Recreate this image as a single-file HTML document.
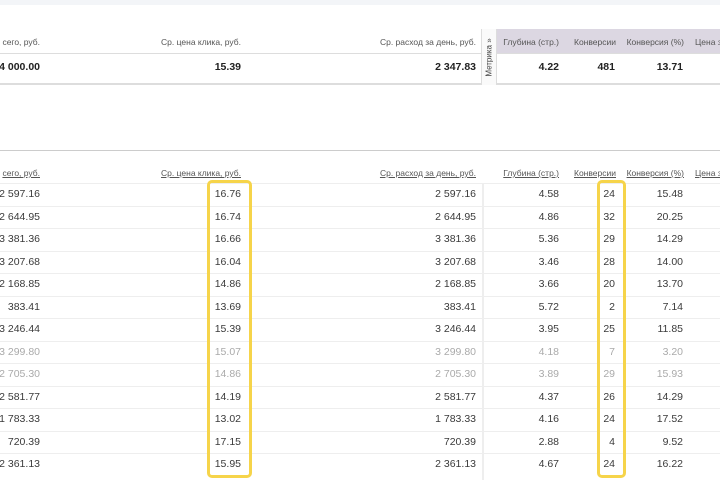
<!DOCTYPE html>
<html><head><meta charset="utf-8"><style>
body{margin:0;width:720px;height:480px;overflow:hidden;background:#fff;position:relative;font-family:"Liberation Sans","DejaVu Sans",sans-serif;color:#333}
.a{position:absolute;white-space:nowrap;text-align:right}
.h{font-size:8.5px;color:#555}
.u{text-decoration:underline}
.c{font-size:10.5px;color:#3a3a3a}
.b{font-size:10.5px;font-weight:bold;color:#222}
.g{color:#aaa}
.ln{position:absolute;left:0;width:720px;height:1px}
</style></head><body>
<div style="position:absolute;left:0;top:0;width:720px;height:5px;background:#f3f5f8"></div>
<div style="position:absolute;left:497px;top:29px;width:223px;height:24px;background:#dcd7e2"></div>
<div class="ln" style="top:53px;background:#ddd"></div>
<div class="ln" style="top:83px;background:#ddd;height:2px"></div>
<div style="position:absolute;left:481px;top:29px;width:16px;height:56px;background:#fafafa;border-left:1px solid #ddd;border-right:1px solid #ddd;box-sizing:border-box"></div>
<div style="position:absolute;left:482px;top:30px;width:14px;height:54px;display:flex;align-items:center;justify-content:center"><span style="transform:rotate(-90deg);font-size:8px;color:#444;white-space:nowrap">Метрика »</span></div>
<div class="ln" style="top:150px;background:#ccc"></div>
<div style="position:absolute;left:482px;top:183px;width:2px;height:297px;background:#eee"></div>
<div id="t"></div>
<div style="position:absolute;left:207px;top:180px;width:45px;height:298px;border:3px solid #f6d44a;border-radius:5px;box-sizing:border-box"></div>
<div style="position:absolute;left:597px;top:180px;width:29px;height:298px;border:3px solid #f6d44a;border-radius:5px;box-sizing:border-box"></div>
<script>
var R=[["2 597.16","16.76","2 597.16","4.58","24","15.48"],["2 644.95","16.74","2 644.95","4.86","32","20.25"],["3 381.36","16.66","3 381.36","5.36","29","14.29"],["3 207.68","16.04","3 207.68","3.46","28","14.00"],["2 168.85","14.86","2 168.85","3.66","20","13.70"],["383.41","13.69","383.41","5.72","2","7.14"],["3 246.44","15.39","3 246.44","3.95","25","11.85"],["3 299.80","15.07","3 299.80","4.18","7","3.20",1],["2 705.30","14.86","2 705.30","3.89","29","15.93",1],["2 581.77","14.19","2 581.77","4.37","26","14.29"],["1 783.33","13.02","1 783.33","4.16","24","17.52"],["720.39","17.15","720.39","2.88","4","9.52"],["2 361.13","15.95","2 361.13","4.67","24","16.22"]];
var E=[40,241,476,559,616,684],V=[40,241,476,559,615,683],h='';
function s(x,y,cl,t){h+='<div class="a '+cl+'" style="right:'+(720-x)+'px;top:'+y+'px">'+t+'</div>';}
var H=["сего, руб.","Ср. цена клика, руб.","Ср. расход за день, руб.","Глубина (стр.)","Конверсии","Конверсия (%)"];
for(var i=0;i<6;i++){s(E[i],37,'h',H[i]);s(E[i],168,'h u',H[i]);}
h+='<div class="a h" style="left:695px;top:37px;text-align:left">Цена з</div><div class="a h u" style="left:695px;top:168px;text-align:left">Цена з</div>';
var S=["84 000.00","15.39","2 347.83","4.22","481","13.71"];
for(i=0;i<6;i++)s(V[i],61,'b',S[i]);
for(var r=0;r<R.length;r++){var y=Math.round(183+r*22.5);
h+='<div class="ln" style="top:'+y+'px;background:#eee"></div>';
for(i=0;i<6;i++)s(V[i],y+5,'c'+(R[r][6]?' g':''),R[r][i]);}
document.getElementById('t').innerHTML=h;
</script>
</body></html>
